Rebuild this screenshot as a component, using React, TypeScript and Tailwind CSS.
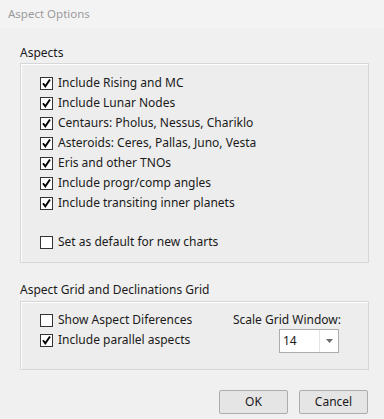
import React from "react";

const ASPECTS = [
  { label: "Include Rising and MC", checked: true },
  { label: "Include Lunar Nodes", checked: true },
  { label: "Centaurs: Pholus, Nessus, Chariklo", checked: true },
  { label: "Asteroids: Ceres, Pallas, Juno, Vesta", checked: true },
  { label: "Eris and other TNOs", checked: true },
  { label: "Include progr/comp angles", checked: true },
  { label: "Include transiting inner planets", checked: true },
];

function Check({ label, checked }: { label: string; checked: boolean }) {
  return (
    <label className="flex h-[20px] items-center">
      <span className="flex h-[13px] w-[13px] items-center justify-center border border-[#333333] bg-white">
        {checked && (
          <svg width="11" height="11" viewBox="0 0 11 11">
            <path d="M2 5.2 L4.3 8.3 L9 1.5" fill="none" stroke="#000" strokeWidth="1.9" />
          </svg>
        )}
      </span>
      <span className="ml-[5px] whitespace-nowrap">{label}</span>
    </label>
  );
}

export default function App() {
  return (
    <div className="h-[419px] w-[384px] overflow-hidden bg-[#f0f0f0] text-[12px] leading-[20px] text-[#1a1a1a] font-['Noto_Sans',sans-serif]">
      <div className="flex h-[28px] items-center bg-[#f3f3f3] px-[8px] text-[11.5px] text-[#9b9b9b]">Aspect Options</div>

      <div className="pl-[20px] pr-[15px] pt-[15px]">
        <div className="h-[20px]">Aspects</div>
        <div className="h-[200px] border border-[#d7d7d7] bg-[#ededed] pl-[19px] pt-[9px] shadow-[inset_1px_1px_0_#ffffff]">
          {ASPECTS.map((a) => (
            <Check key={a.label} label={a.label} checked={a.checked} />
          ))}
          <div className="mt-[19px]">
            <Check label="Set as default for new charts" checked={false} />
          </div>
        </div>

        <div className="mt-[17px] h-[20px]">Aspect Grid and Declinations Grid</div>
        <div className="mt-[1px] flex h-[69px] border border-[#d7d7d7] bg-[#ededed] pl-[19px] pt-[8px] shadow-[inset_1px_1px_0_#ffffff]">
          <div className="w-[190px]">
            <Check label="Show Aspect Diferences" checked={false} />
            <Check label="Include parallel aspects" checked={true} />
          </div>
          <div className="flex w-[111px] flex-col items-end">
            <div className="whitespace-nowrap">Scale Grid Window:</div>
            <div className="mr-[2px] mt-[-1px] flex h-[24px] w-[60px] items-center border border-[#acacac] bg-white">
              <span className="flex-1 pl-[3px]">14</span>
              <span className="flex h-full w-[19px] items-center justify-center border-l border-[#e3e3e3]">
                <svg width="7" height="4" viewBox="0 0 7 4">
                  <path d="M0 0 H7 L3.5 4 Z" fill="#6d6d6d" />
                </svg>
              </span>
            </div>
          </div>
        </div>

        <div className="mt-[20px] flex justify-end gap-[11px] pr-[1px]">
          <button className="h-[24px] w-[69px] rounded-[2px] border border-[#adadad] bg-[#e5e5e5]">OK</button>
          <button className="h-[24px] w-[69px] rounded-[2px] border border-[#adadad] bg-[#e5e5e5]">Cancel</button>
        </div>
      </div>
    </div>
  );
}
